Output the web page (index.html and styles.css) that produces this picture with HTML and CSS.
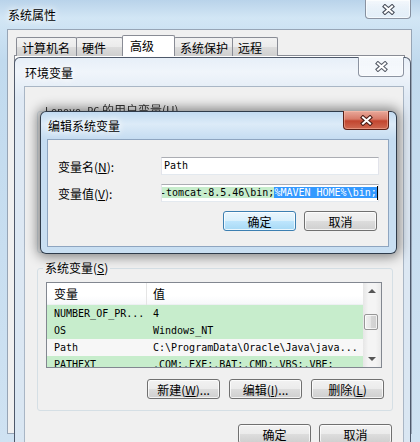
FILE: index.html
```html
<!DOCTYPE html>
<html lang="zh-CN">

<head>
    <meta charset="UTF-8" />
    <title>编辑系统变量</title>
    <link rel="stylesheet" href="styles.css">
</head>

<body>

    <!-- 系统属性 -->
    <div class="win win-sys">
        <div class="titlebar">
            <span class="title">系统属性</span>
            <span class="close">
                <svg width="13" height="11" viewBox="0 0 13 11"><path d="M3 2.5 L10 8.5 M10 2.5 L3 8.5" stroke="#4a505c" stroke-width="4.2" stroke-linecap="square"/><path d="M3 2.5 L10 8.5 M10 2.5 L3 8.5" stroke="#fff" stroke-width="2" stroke-linecap="square"/></svg>
            </span>
        </div>
        <div class="client sys-client">
            <div class="tabs">
                <div class="tab t1">计算机名</div>
                <div class="tab t2">硬件</div>
                <div class="tab t3 active">高级</div>
                <div class="tab t4">系统保护</div>
                <div class="tab t5">远程</div>
            </div>
            <div class="tabpanel"></div>
        </div>
    </div>

    <!-- 环境变量 -->
    <div class="win win-env">
        <div class="titlebar">
            <span class="title">环境变量</span>
            <span class="close">
                <svg width="13" height="11" viewBox="0 0 13 11"><path d="M3 2.5 L10 8.5 M10 2.5 L3 8.5" stroke="#5a606b" stroke-width="4.2" stroke-linecap="square"/><path d="M3 2.5 L10 8.5 M10 2.5 L3 8.5" stroke="#fff" stroke-width="2" stroke-linecap="square"/></svg>
            </span>
        </div>
        <div class="client env-client">
            <fieldset class="group group-user">
                <legend><span class="mono">Lenovo-PC</span> 的用户变量(<u>U</u>)</legend>
            </fieldset>

            <fieldset class="group group-sys">
                <legend>系统变量(<u>S</u>)</legend>
                <div class="list">
                    <div class="list-body">
                        <div class="list-head">
                            <span class="col1">变量</span>
                            <span class="col2">值</span>
                        </div>
                        <div class="row green">
                            <span class="col1 mono">NUMBER_OF_PR...</span>
                            <span class="col2 mono">4</span>
                        </div>
                        <div class="row green">
                            <span class="col1 mono">OS</span>
                            <span class="col2 mono">Windows_NT</span>
                        </div>
                        <div class="row sel">
                            <span class="col1 mono">Path</span>
                            <span class="col2 mono">C:\ProgramData\Oracle\Java\java...</span>
                        </div>
                        <div class="row green">
                            <span class="col1 mono">PATHEXT</span>
                            <span class="col2 mono">.COM;.EXE;.BAT;.CMD;.VBS;.VBE;</span>
                        </div>
                    </div>
                    <div class="scroll">
                        <div class="arrow up"></div>
                        <div class="track"><div class="thumb"></div></div>
                        <div class="arrow down"></div>
                    </div>
                </div>
                <div class="btnrow">
                    <button class="btn">新建(<u>W</u>)...</button>
                    <button class="btn">编辑(<u>I</u>)...</button>
                    <button class="btn">删除(<u>L</u>)</button>
                </div>
            </fieldset>

            <div class="btnrow bottom">
                <button class="btn">确定</button>
                <button class="btn">取消</button>
            </div>
        </div>
    </div>

    <!-- 编辑系统变量 -->
    <div class="win win-edit">
        <div class="titlebar">
            <span class="title">编辑系统变量</span>
            <span class="close red">
                <svg width="13" height="11" viewBox="0 0 13 11"><path d="M3 2.5 L10 8.5 M10 2.5 L3 8.5" stroke="#4b1d16" stroke-width="4.2" stroke-linecap="square"/><path d="M3 2.5 L10 8.5 M10 2.5 L3 8.5" stroke="#fff" stroke-width="2" stroke-linecap="square"/></svg>
            </span>
        </div>
        <div class="client edit-client">
            <div class="field">
                <label>变量名(<u>N</u>):</label>
                <div class="input mono"><span>Path</span></div>
            </div>
            <div class="field">
                <label>变量值(<u>V</u>):</label>
                <div class="input mono"><span class="scrolled"><span class="hl">-tomcat-8.5.46\bin;</span><span class="selected">%MAVEN_HOME%\bin;</span></span><span class="caret"></span></div>
            </div>
            <div class="btnrow">
                <button class="btn default">确定</button>
                <button class="btn">取消</button>
            </div>
        </div>
    </div>

</body>

</html>
```

FILE: styles.css
```css
* {
    box-sizing: border-box;
}

html,
body {
    margin: 0;
    padding: 0;
}

body {
    width: 420px;
    height: 442px;
    overflow: hidden;
    position: relative;
    background: #c6dcef;
    font-family: "Noto Sans CJK SC", "Liberation Sans", sans-serif;
    font-size: 12px;
    color: #000;
}

u {
    text-decoration: underline;
    text-underline-offset: 1px;
}

.mono {
    font-family: "DejaVu Sans Mono", "Liberation Mono", "Noto Sans CJK SC", monospace;
    font-size: 10px;
    letter-spacing: 0;
}

/* ventanas */
.win {
    position: absolute;
    display: flex;
    flex-direction: column;
    border: 1px solid rgba(30, 40, 60, 0.75);
    border-radius: 6px 6px 0 0;
}

.titlebar {
    position: relative;
    flex: none;
}

.title {
    display: block;
    text-shadow: 0 0 6px #fff, 0 0 10px #fff;
}

.close {
    position: absolute;
    width: 46px;
    height: 20px;
    display: flex;
    align-items: center;
    justify-content: center;
    border: 1px solid rgba(70, 80, 100, 0.6);
    border-top: none;
    border-radius: 0 0 4px 4px;
    background: linear-gradient(#f4f8fc, rgba(255, 255, 255, 0.4));
    box-shadow: inset 0 0 0 1px rgba(255, 255, 255, 0.6);
}

.close.red {
    border-color: #5b2118;
    background: linear-gradient(#e9a99b 0%, #d77b69 45%, #c2452f 55%, #cf6a52 100%);
    box-shadow: inset 0 0 0 1px rgba(255, 200, 180, 0.45);
}

.client {
    flex: 1;
    background: #f0f0f0;
}

/* 系统属性 */
.win-sys {
    left: 0;
    top: 0;
    width: 420px;
    height: 442px;
    border: none;
    border-radius: 0;
    padding: 0 8px 8px 7px;
    background: linear-gradient(180deg, #b9d3ea 0, #d2e6f5 18px, #c1daee 60px, #cfe2f2 100%);
}

.win-sys .titlebar {
    height: 29px;
}

.win-sys .title {
    padding-left: 1px;
    line-height: 30px;
}

.win-sys .close {
    top: 0;
    right: 1px;
    height: 19px;
}

.sys-client {
    border: 1px solid #97a5b6;
    padding: 5px 0 0 8px;
}

.tabs {
    display: flex;
    align-items: flex-end;
    height: 21px;
    position: relative;
    z-index: 1;
}

.tab {
    height: 19px;
    line-height: 19px;
    padding-left: 5px;
    border: 1px solid #898c95;
    border-bottom: none;
    margin-right: -1px;
    background: linear-gradient(#f2f2f2 0%, #ebebeb 50%, #dddddd 50%, #cfcfcf 100%);
    border-radius: 2px 2px 0 0;
}

.t1 {
    width: 61px;
}

.t2 {
    width: 47px;
}

.t3 {
    width: 53px;
}

.t4 {
    width: 59px;
}

.t5 {
    width: 46px;
}

.tab.active {
    height: 21px;
    padding-left: 7px;
    line-height: 19px;
    background: #fff;
    position: relative;
    z-index: 2;
}

.tabpanel {
    margin: -1px 6px 0 -2px;
    height: 344px;
    border: 1px solid #898c95;
    background: #fff;
}

/* 环境变量 */
.win-env {
    left: 14px;
    top: 57px;
    width: 397px;
    height: 400px;
    padding: 0 6px 0 9px;
    background: linear-gradient(180deg, #e7eff8 0, #f0f5fb 14px, #dfe9f4 40px, #d9e6f2 100%);
}

.win-env .titlebar {
    height: 28px;
}

.win-env .title {
    padding-left: 1px;
    line-height: 29px;
}

.win-env .close {
    top: -1px;
    right: 0;
    height: 20px;
}

.env-client {
    border: 1px solid #a9b6c5;
    border-bottom: none;
    padding: 16px 10px 0 12px;
}

.group {
    margin: 0;
    min-width: 0;
    border: 1px solid #d5dfe5;
    border-radius: 3px;
    padding: 7px 10px 0 8px;
}

.group legend {
    padding: 0 2px;
    margin-left: -3px;
    line-height: 14px;
}

.group-user {
    height: 150px;
}

.group-user legend {
    color: #333;
    filter: blur(0.4px);
}

.group-sys {
    margin-top: 8px;
    height: 150px;
}

/* lista */
.list {
    height: 86px;
    border: 1px solid #828790;
    display: flex;
    overflow: hidden;
    background: #fff;
}

.list-body {
    flex: 1;
}

.list-head {
    display: flex;
    height: 22px;
    align-items: center;
    background: linear-gradient(#fff 60%, #f7f8fa);
    border-bottom: 1px solid #eef0f3;
}

.list-head .col1 {
    border-right: 1px solid #e5e5e5;
    height: 22px;
    line-height: 22px;
}

.col1 {
    width: 100px;
    padding-left: 7px;
    flex: none;
}

.col2 {
    padding-left: 6px;
    white-space: nowrap;
}

.row {
    display: flex;
    height: 17px;
    line-height: 17px;
    align-items: center;
}

.row.green {
    background: #c7edcc;
}

.row.sel {
    background: #f7f7f7;
}

.scroll {
    width: 18px;
    flex: none;
    display: flex;
    flex-direction: column;
    background: linear-gradient(90deg, #e6e6e6, #f4f4f4 30%, #f4f4f4 70%, #e9e9e9);
}

.arrow {
    height: 17px;
    position: relative;
}

.arrow::after {
    content: "";
    position: absolute;
    left: 5px;
    top: 6px;
    border-left: 4px solid transparent;
    border-right: 4px solid transparent;
}

.arrow.up::after {
    border-bottom: 4px solid #555;
}

.arrow.down::after {
    top: 7px;
    border-top: 4px solid #555;
}

.track {
    flex: 1;
}

.thumb {
    margin: 14px 3px 0 1px;
    height: 16px;
    border: 1px solid #979797;
    border-radius: 2px;
    background: linear-gradient(90deg, #f2f2f2, #e4e4e4 50%, #d6d6d6 50%, #d0d0d0);
    box-shadow: inset 0 0 0 1px rgba(255, 255, 255, 0.7);
}

/* botones */
.btnrow {
    display: flex;
    justify-content: flex-end;
    gap: 9px;
}

.group-sys .btnrow {
    margin: 11px -2px 0 0;
}

.btnrow.bottom {
    margin-top: 13px;
    margin-right: 1px;
    gap: 8px;
}

.btn {
    width: 73px;
    height: 20px;
    padding: 0;
    font: inherit;
    color: #000;
    line-height: 17px;
    border: 1px solid #707070;
    border-radius: 3px;
    background: linear-gradient(#f2f2f2 0%, #ebebeb 50%, #dddddd 50%, #cfcfcf 100%);
    box-shadow: inset 0 0 0 1px rgba(255, 255, 255, 0.75);
}

.btn.default {
    border-color: #3c7fb1;
    background: linear-gradient(#eaf6fd 0%, #d9f0fc 50%, #bee6fd 50%, #a7d9f5 100%);
}

/* 编辑系统变量 */
.win-edit {
    left: 40px;
    top: 111px;
    width: 357px;
    height: 143px;
    border-radius: 6px;
    border-color: rgba(20, 30, 45, 0.85);
    padding: 0 7px 6px 6px;
    background: linear-gradient(180deg, #c3dbf1 0, #dcebf8 12px, #c5dcf1 27px, #c9dff2 100%);
    box-shadow: 0 0 12px 3px rgba(0, 0, 0, 0.45);
}

.win-edit .titlebar {
    height: 27px;
}

.win-edit .title {
    padding-left: 1px;
    line-height: 27px;
}

.win-edit .close {
    top: -1px;
    right: 0;
    height: 19px;
}

.edit-client {
    border: 1px solid #8ea5c0;
    padding: 17px 9px 0 10px;
}

.field {
    display: flex;
    align-items: center;
    height: 18px;
    margin-bottom: 9px;
}

.field label {
    width: 103px;
    flex: none;
}

.input {
    flex: 1;
    height: 18px;
    background: #fff;
    border: 1px solid #e2e3ea;
    border-top-color: #abadb3;
    border-bottom-color: #e3e9ef;
    padding-left: 2px;
    line-height: 16px;
    white-space: nowrap;
    overflow: hidden;
    display: flex;
    align-items: center;
}

.scrolled {
    margin-left: -4px;
}

.hl {
    background: #c7edcc;
}

.selected {
    background: #3399ff;
    color: #fff;
}

.caret {
    width: 1px;
    height: 14px;
    background: #000;
}

.edit-client .btnrow {
    margin: 4px 2px 0 0;
    gap: 8px;
}
```
